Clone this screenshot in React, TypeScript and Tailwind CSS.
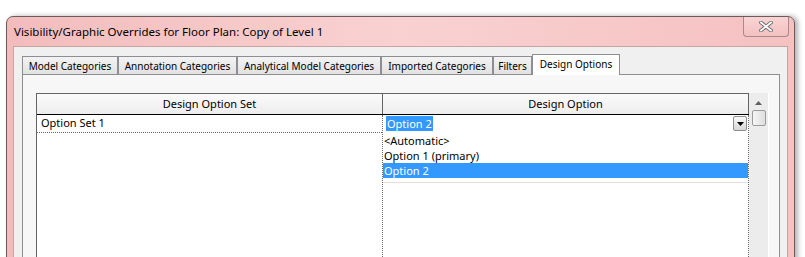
const tabs = [
  { label: "Model Categories", w: "w-[96px]" },
  { label: "Annotation Categories", w: "w-[119px]" },
  { label: "Analytical Model Categories", w: "w-[144px]" },
  { label: "Imported Categories", w: "w-[112px]" },
  { label: "Filters", w: "w-[39px]" },
];

function CloseButton() {
  return (
    <div className="shrink-0 -mr-[1px] w-[46px] h-[20px] rounded-b-[4px] border border-t-0 border-[#a88a8a] bg-linear-to-b from-[#f9d4d4] to-[#f3c0c0] flex items-center justify-center">
      <svg width="14" height="11" viewBox="0 0 14 11">
        <path d="M2 1.5 L12 9.5 M12 1.5 L2 9.5" stroke="#6e6e6e" strokeWidth="3.6" strokeLinecap="square" />
        <path d="M2 1.5 L12 9.5 M12 1.5 L2 9.5" stroke="#ffffff" strokeWidth="1.8" strokeLinecap="square" />
      </svg>
    </div>
  );
}

function ScrollBar() {
  return (
    <div className="w-[20px] bg-[#ececec] border-r border-white flex flex-col items-center">
      <div className="h-[17px] w-full flex items-center justify-center pt-[2px]">
        <svg width="7" height="4" viewBox="0 0 7 4">
          <path d="M0 4 L3.5 0 L7 4 Z" fill="#606060" />
        </svg>
      </div>
      <div className="ml-[1px] w-[14px] h-[16px] rounded-[2px] border border-[#9b9b9b] bg-linear-to-r from-[#f6f6f6] to-[#dedede]" />
    </div>
  );
}

function DropButton() {
  return (
    <div className="w-[14px] h-[15px] rounded-[2px] border border-[#8e8e8e] bg-linear-to-b from-[#fafafa] to-[#d6d6d6] flex items-center justify-center">
      <svg width="7" height="4" viewBox="0 0 7 4">
        <path d="M0 0 L7 0 L3.5 4 Z" fill="#000000" />
      </svg>
    </div>
  );
}

export default function App() {
  return (
    <div className="w-[805px] h-[257px] overflow-hidden bg-white pt-[16px] pl-[6px] font-['Noto_Sans',sans-serif] text-[11px] text-black">
      <div className="w-[789px] h-[320px] rounded-t-[7px] border border-[#6d5b5b] bg-linear-to-r from-[#f3bcbc] via-[#f9d1d1] to-[#f5c1c1] px-[6px] flex flex-col shadow-[3px_0_5px_rgba(0,0,0,0.3)]">
        {/* title bar */}
        <div className="h-[29px] shrink-0 flex items-start justify-between">
          <div className="h-full flex items-center pl-[1px] pt-[1px] text-[11.5px]">
            Visibility/Graphic Overrides for Floor Plan: Copy of Level 1
          </div>
          <CloseButton />
        </div>

        {/* client area */}
        <div className="flex-1 bg-[#f0f0f0] border border-[#c6a4a4] pl-[8px] pr-[7px] pt-[6px]">
          <div className="flex items-end h-[21px] text-[10px]">
            {tabs.map((t) => (
              <div
                key={t.label}
                className={`${t.w} h-[18px] border border-b-0 border-[#8c8e94] bg-linear-to-b from-[#f3f3f3] to-[#e2e2e2] flex items-center justify-center leading-none whitespace-nowrap`}
              >
                {t.label}
              </div>
            ))}
            <div className="w-[88px] h-[21px] -mb-[1px] relative z-10 border border-b-0 border-[#8c8e94] bg-white flex items-center justify-center leading-none pb-[2px] whitespace-nowrap">
              Design Options
            </div>
          </div>

          {/* tab panel */}
          <div className="h-[300px] border border-[#8c8e94] bg-[#f7f7f7] pl-[13px] pt-[18px]">
            <div className="flex h-[280px]">
              <div className="w-[713px] border-l border-t border-[#646464] bg-white flex flex-col">
                {/* header */}
                <div className="flex h-[21px] border-b border-black bg-linear-to-b from-[#fbfbfb] to-[#ededed]">
                  <div className="w-[346px] border-r border-[#646464] flex items-center justify-center">
                    Design Option Set
                  </div>
                  <div className="w-[366px] border-r border-[#646464] flex items-center justify-center">
                    Design Option
                  </div>
                </div>
                {/* body */}
                <div className="flex flex-1">
                  <div className="w-[346px] border-r border-dotted border-[#6a6a6a]">
                    <div className="h-[18px] border-b border-dotted border-[#6a6a6a] pl-[4px] flex items-center">
                      Option Set 1
                    </div>
                  </div>
                  <div className="w-[366px] border-r border-dotted border-[#6a6a6a]">
                    <div className="h-[17px] flex items-center justify-between pl-[3px] pr-[1px]">
                      <span className="bg-[#3399ff] text-white px-[1px] leading-[15px]">Option 2</span>
                      <DropButton />
                    </div>
                    <div className="pt-[1px] pb-[4px] border-b border-[#e2e2e2]">
                      <div className="h-[15px] leading-[15px] pl-[1px]">&lt;Automatic&gt;</div>
                      <div className="h-[15px] leading-[15px] pl-[1px]">Option 1 (primary)</div>
                      <div className="h-[15px] leading-[15px] pl-[1px] bg-[#3399ff] text-white">Option 2</div>
                    </div>
                  </div>
                </div>
              </div>
              <ScrollBar />
            </div>
          </div>
        </div>
      </div>
    </div>
  );
}
